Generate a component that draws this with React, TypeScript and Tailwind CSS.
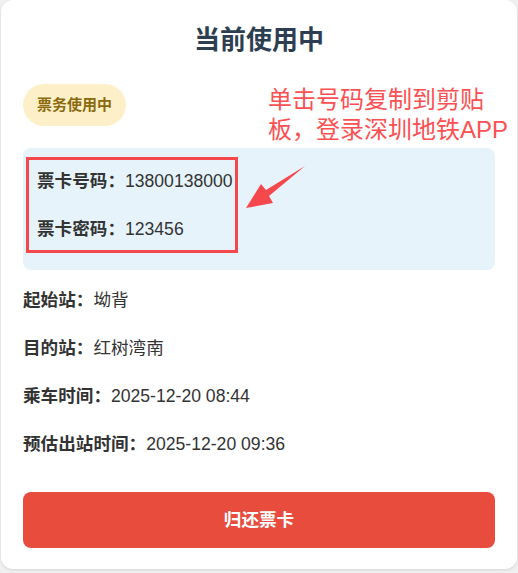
import React from "react";

const font = { fontFamily: '"Liberation Sans", Arial, "Noto Sans CJK SC", sans-serif' };

function Row({ label, value }: { label: string; value: string }) {
  return (
    <div className="flex h-[26px] items-center text-[17.6px] leading-[26px] text-[#333333]">
      <span className="font-bold">{label}</span>
      <span>{value}</span>
    </div>
  );
}

export default function App() {
  return (
    <div className="h-[573px] w-[518px] bg-[#f0f0f0] px-px" style={font}>
      <div className="relative h-[569px] rounded-xl bg-white px-[22px] pt-[23px] shadow-[0_1px_3px_rgba(0,0,0,0.12)]">
        <h1 className="text-center text-[26px] font-bold leading-[34px] text-[#2c3e50]">当前使用中</h1>
        <div className="mt-[27px] flex">
          <span className="flex h-[42px] items-center rounded-full bg-[#fdf0c8] px-[14px] text-[15px] font-bold text-[#8a6a0e]">
            票务使用中
          </span>
        </div>
        <div className="mt-[22px] flex flex-col gap-[22px] rounded-lg bg-[#e6f3fb] px-[14px] pb-[28px] pt-[20px]">
          <Row label="票卡号码：" value="13800138000" />
          <Row label="票卡密码：" value="123456" />
        </div>
        <div className="mt-[17px] flex flex-col gap-[22px]">
          <Row label="起始站：" value="坳背" />
          <Row label="目的站：" value="红树湾南" />
          <Row label="乘车时间：" value="2025-12-20 08:44" />
          <Row label="预估出站时间：" value="2025-12-20 09:36" />
        </div>
        <button className="mt-[35px] flex h-[56px] w-full items-center justify-center rounded-lg bg-[#e74c3c] text-[17.6px] font-bold text-white">
          归还票卡
        </button>

        <div className="pointer-events-none absolute left-[267px] top-[85px] text-[24px] leading-[30px] text-[#fd5052]">
          单击号码复制到剪贴
          <br />
          板，登录深圳地铁APP
        </div>
        <div className="pointer-events-none absolute left-[25px] top-[157px] h-[96px] w-[212px] border-[3px] border-[#f5484c]" />
        <svg className="pointer-events-none absolute left-0 top-0" width="516" height="569" viewBox="0 0 516 569">
          <polygon
            points="245,208 260,184 265,190 304,166 268,196 272,203"
            fill="#f5484c"
          />
        </svg>
      </div>
    </div>
  );
}
